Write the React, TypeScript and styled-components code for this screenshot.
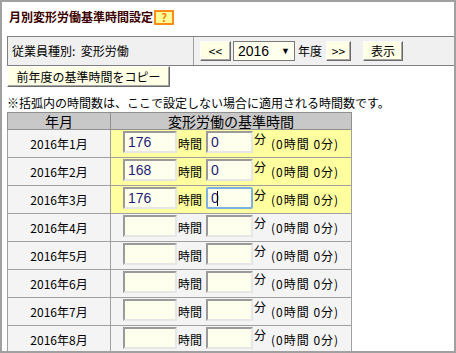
import React from 'react';
import styled, { createGlobalStyle } from 'styled-components';

const Global = createGlobalStyle`
  html, body { margin: 0; padding: 0; background: #fff; }
  body {
    font-family: "Noto Sans CJK JP", "Noto Sans", sans-serif;
    font-size: 12px;
    color: #000;
  }
`;

const Frame = styled.div`
  width: 456px;
  height: 353px;
  box-sizing: border-box;
  border: 2px solid #a0a0a0;
  overflow: hidden;
  padding: 7px 0 0 5px;
  background: #fff;
`;

const TitleRow = styled.div`
  display: flex;
  align-items: center;
  height: 16px;
  padding-left: 2px;
`;

const Title = styled.h1`
  margin: 0;
  font-size: 12px;
  font-weight: bold;
  line-height: 16px;
  color: #3a0000;
`;

const Help = styled.span`
  display: inline-flex;
  justify-content: center;
  align-items: center;
  box-sizing: border-box;
  width: 20px;
  height: 15px;
  margin-left: 1px;
  border: 2px solid #ff8c1a;
  background: #ffff99;
  color: #ff7a00;
  font-weight: bold;
  font-size: 11px;
  line-height: 1;
`;

const Bar = styled.div`
  display: flex;
  margin-top: 11px;
  height: 30px;
  box-sizing: border-box;
  border: 1px solid #808080;
  border-right: none;
  background: #f0f0f0;
`;

const BarLabel = styled.div`
  display: flex;
  align-items: center;
  width: 186px;
  padding-left: 4px;
  box-sizing: border-box;
  border-right: 1px solid #a0a0a0;
  line-height: 14px;
`;

const BarTools = styled.div`
  display: flex;
  align-items: center;
  padding-left: 6px;
`;

const Btn = styled.button<{ $w: number; $ml?: number }>`
  width: ${p => p.$w}px;
  height: 20px;
  margin-left: ${p => p.$ml ?? 0}px;
  padding: 0;
  box-sizing: border-box;
  font-family: inherit;
  font-size: 12px;
  line-height: 14px;
  color: #000;
  background: #ffffe6;
  border: 1px solid;
  border-color: #ffffff #6a6a6a #6a6a6a #ffffff;
  box-shadow: inset -1px -1px 0 #a8a8a8;
  cursor: pointer;
`;

const SelectBox = styled.div`
  display: flex;
  align-items: center;
  justify-content: space-between;
  width: 62px;
  height: 20px;
  margin-left: 2px;
  box-sizing: border-box;
  padding: 0 4px 0 4px;
  border: 1px solid #7a7a7a;
  background: #ffffee;
  font-family: "Liberation Sans", Arial, sans-serif;
  font-size: 14px;
`;

const Arrow = styled.span`
  font-size: 9px;
`;

const Unit = styled.span`
  margin: 0 4px 0 3px;
  line-height: 14px;
`;

const CopyBtn = styled(Btn)`
  display: block;
  height: 21px;
  margin-top: 0;
`;

const Note = styled.p`
  margin: 9px 0 0 0;
  line-height: 14px;
  white-space: nowrap;
`;

const Table = styled.table`
  margin-top: 2px;
  width: 345px;
  border-collapse: collapse;
  border: 1px solid #808080;
`;

const Th = styled.th`
  height: 16px;
  padding: 0;
  background: #c8c8c8;
  border: 1px solid #909090;
  font-weight: normal;
  font-size: 14px;
  line-height: 16px;
`;

const MonthCell = styled.td`
  width: 102px;
  height: 27px;
  padding: 0;
  text-align: center;
  background: #f4f4f4;
  border: 1px solid #a0a0a0;
  line-height: 14px;
`;

const TimeCell = styled.td<{ $hl: boolean }>`
  height: 27px;
  padding: 0 0 0 12px;
  background: ${p => (p.$hl ? '#ffffa0' : '#f4f4f4')};
  border: 1px solid #a0a0a0;
`;

const TimeRow = styled.div`
  display: flex;
  align-items: center;
  height: 27px;
`;

const Field = styled.div<{ $w: number }>`
  position: relative;
  width: ${p => p.$w}px;
  height: 22px;
  margin-top: -3px;
`;

const Input = styled.input<{ $focus?: boolean }>`
  width: 100%;
  height: 100%;
  box-sizing: border-box;
  margin: 0;
  padding: 0 3px;
  font-family: "Liberation Sans", Arial, sans-serif;
  font-size: 14px;
  color: #1e1e78;
  background: #ffffee;
  border: 2px solid;
  border-color: ${p =>
    p.$focus ? '#7eb0e0' : '#9a9a9a #e6e6e6 #e6e6e6 #9a9a9a'};
  border-radius: ${p => (p.$focus ? '2px' : '0')};
  outline: none;
`;

const Caret = styled.span`
  position: absolute;
  left: 11px;
  top: 4px;
  width: 1px;
  height: 15px;
  background: #000;
`;

const Label = styled.span`
  line-height: 14px;
  margin: 0 4px 0 1px;
`;

const MinLabel = styled.span`
  align-self: flex-start;
  margin: 3px 0 0 1px;
  line-height: 12px;
`;

const Default = styled.span`
  margin-left: 5px;
  line-height: 14px;
  font-size: 12px;
  letter-spacing: 1px;
`;

type Row = { month: number; h: string; m: string; hl: boolean; focus?: boolean };

const rows: Row[] = [
  { month: 1, h: '176', m: '0', hl: true },
  { month: 2, h: '168', m: '0', hl: true },
  { month: 3, h: '176', m: '0', hl: true, focus: true },
  { month: 4, h: '', m: '', hl: false },
  { month: 5, h: '', m: '', hl: false },
  { month: 6, h: '', m: '', hl: false },
  { month: 7, h: '', m: '', hl: false },
  { month: 8, h: '', m: '', hl: false },
];

export default function App() {
  return (
    <>
      <Global />
      <Frame>
        <TitleRow>
          <Title>月別変形労働基準時間設定</Title>
          <Help>?</Help>
        </TitleRow>
        <Bar>
          <BarLabel>従業員種別:&nbsp;&nbsp;変形労働</BarLabel>
          <BarTools>
            <Btn $w={31}>&lt;&lt;</Btn>
            <SelectBox>
              <span>2016</span>
              <Arrow>▼</Arrow>
            </SelectBox>
            <Unit>年度</Unit>
            <Btn $w={25}>&gt;&gt;</Btn>
            <Btn $w={40} $ml={12}>表示</Btn>
          </BarTools>
        </Bar>
        <CopyBtn $w={163}>前年度の基準時間をコピー</CopyBtn>
        <Note>※括弧内の時間数は、ここで設定しない場合に適用される時間数です。</Note>
        <Table>
          <thead>
            <tr>
              <Th>年月</Th>
              <Th>変形労働の基準時間</Th>
            </tr>
          </thead>
          <tbody>
            {rows.map(r => (
              <tr key={r.month}>
                <MonthCell>2016年{r.month}月</MonthCell>
                <TimeCell $hl={r.hl}>
                  <TimeRow>
                    <Field $w={54}>
                      <Input defaultValue={r.h} />
                    </Field>
                    <Label>時間</Label>
                    <Field $w={47}>
                      <Input defaultValue={r.m} $focus={r.focus} />
                      {r.focus && <Caret />}
                    </Field>
                    <MinLabel>分</MinLabel>
                    <Default>(0時間 0分)</Default>
                  </TimeRow>
                </TimeCell>
              </tr>
            ))}
          </tbody>
        </Table>
      </Frame>
    </>
  );
}
